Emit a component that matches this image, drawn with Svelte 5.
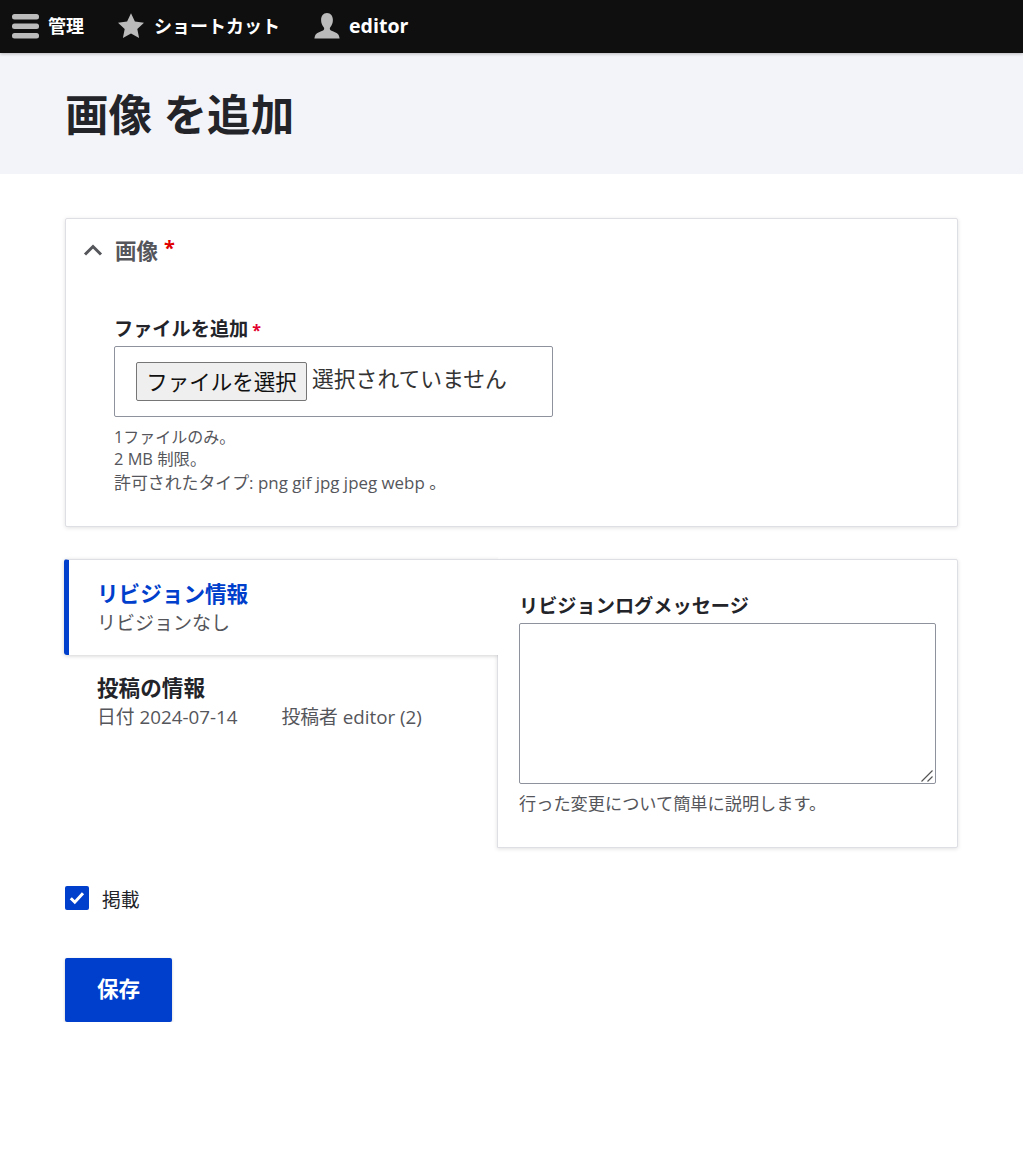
<script>
  const hints = ['1ファイルのみ。', '2 MB 制限。', '許可されたタイプ: png gif jpg jpeg webp 。'];
</script>

<div class="toolbar">
  <a class="tool first">
    <svg width="28" height="28" viewBox="0 0 28 28"><g fill="#bbb"><rect x="0" y="2" width="27" height="5.5" rx="2.5"/><rect x="0" y="11.5" width="27" height="5.5" rx="2.5"/><rect x="0" y="21" width="27" height="5.5" rx="2.5"/></g></svg>
    <span>管理</span>
  </a>
  <a class="tool second">
    <svg width="28" height="28" viewBox="0 0 28 28"><path fill="#bbb" d="M14 1.2l3.900 8.400 9.100 1.100-6.700 6.200 1.800 9.100L14 21.500l-8.100 4.500 1.800-9.100L1 10.700l9.100-1.100z"/></svg>
    <span>ショートカット</span>
  </a>
  <a class="tool third">
    <svg width="28" height="28" viewBox="0 0 28 28"><path fill="#bbb" d="M14 1c3.800 0 5.900 3 5.900 7 0 3-1.100 5.600-2.600 7.200-.8.900-.6 2.600.6 3.300 2.200 1.200 6.200 2 7.600 4.300.6 1.100 1 2.800 1.100 3.700H1.400c.1-.9.500-2.600 1.100-3.700 1.400-2.300 5.400-3.100 7.600-4.300 1.200-.7 1.400-2.400.6-3.300C9.200 13.600 8.100 11 8.100 8c0-4 2.100-7 5.900-7z"/></svg>
    <span class="latin">editor</span>
  </a>
</div>

<header class="page-head">
  <h1>画像 を追加</h1>
</header>

<main>
  <section class="card image-card">
    <div class="summary">
      <svg class="chev" width="20" height="12" viewBox="0 0 20 12"><path d="M2 10.500L10 2.500l8 8" fill="none" stroke="#55565b" stroke-width="3"/></svg>
      <span class="sum-label">画像</span><span class="sum-star">*</span>
    </div>
    <div class="image-body">
      <div class="label">ファイルを追加<span class="star">*</span></div>
      <div class="file-box">
        <button type="button" class="file-btn">ファイルを選択</button>
        <span class="file-none">選択されていません</span>
      </div>
      <div class="hints">
        {#each hints as h}<div>{h}</div>{/each}
      </div>
    </div>
  </section>

  <div class="split">
    <div class="tabs">
      <div class="tab active">
        <div class="tab-title">リビジョン情報</div>
        <div class="tab-sub">リビジョンなし</div>
      </div>
      <div class="tab plain">
        <div class="tab-title dark">投稿の情報</div>
        <div class="tab-sub meta"><span>日付 2024-07-14</span><span>投稿者 editor (2)</span></div>
      </div>
    </div>
    <div class="panel">
      <div class="label">リビジョンログメッセージ</div>
      <div class="area-wrap">
        <textarea></textarea>
        <svg class="grip" width="12" height="12" viewBox="0 0 12 12"><path d="M.5 11.500l11-11M6.500 11.500l5-5" fill="none" stroke="#555" stroke-width="1.200"/></svg>
      </div>
      <div class="desc">行った変更について簡単に説明します。</div>
    </div>
  </div>

  <label class="check">
    <span class="box">
      <svg width="16" height="14" viewBox="0 0 16 14"><path d="M1.800 7.200l4 4 8.200-9" fill="none" stroke="#fff" stroke-width="3"/></svg>
    </span>
    <span class="check-text">掲載</span>
  </label>

  <button type="button" class="save">保存</button>
</main>

<style>
  :global(body) {
    margin: 0;
    background: #fff;
    color: #232429;
    font-family: "Open Sans", "Noto Sans CJK JP", sans-serif;
    font-size: 16px;
  }
  .toolbar {
    height: 53px;
    background: #0f0f0f;
    display: flex;
    align-items: center;
    box-shadow: 0 1px 3px rgba(0, 0, 0, 0.25);
    position: relative;
    color: #fff;
    font-weight: 700;
    font-size: 18px;
  }
  .tool { display: flex; align-items: center; }
  .tool svg { margin-top: -1px; }
  .tool span { margin-top: -3px; }
  .tool span.latin { font-size: 19.6px; margin-top: -2px; }
  .tool.first { margin-left: 12px; gap: 8px; }
  .tool.second { margin-left: 33px; gap: 9px; }
  .tool.third { margin-left: 33px; gap: 8px; }
  .page-head {
    height: 121px;
    background: #f3f4f9;
    padding: 2px 0 0 65px;
    box-sizing: border-box;
    display: flex;
    align-items: center;
  }
  h1 {
    margin: 0;
    font-size: 43.6px;
    line-height: 1.2;
    font-weight: 700;
    color: #232429;
  }
  main { padding: 44px 65px 0; }
  .card {
    background: #fff;
    border: 1px solid #dedfe4;
    border-radius: 2px;
    box-shadow: 0 1px 4px rgba(0, 0, 0, 0.12);
    box-sizing: border-box;
  }
  .image-card { height: 309px; }
  .summary {
    display: flex;
    align-items: center;
    padding: 17px 0 0 17px;
    height: 28px;
    color: #55565b;
    font-weight: 700;
    font-size: 21.5px;
  }
  .chev { margin-right: 12px; }
  .sum-label { margin-top: -2px; }
  .sum-star { color: #e00000; margin-left: 6px; position: relative; top: -3px; font-size: 20px; }
  .image-body { padding: 52px 0 0 48px; }
  .label {
    font-weight: 700;
    font-size: 19.2px;
    line-height: 26px;
    color: #232429;
  }
  .star { color: #e2002e; font-size: 16px; margin-left: 4px; }
  .file-box {
    width: 439px;
    height: 71px;
    box-sizing: border-box;
    border: 1px solid #8e929c;
    border-radius: 2px;
    padding: 15px 0 0 21px;
    margin-top: 3px;
    display: flex;
    align-items: flex-start;
    gap: 5px;
    font-size: 21.8px;
  }
  .file-btn {
    width: 171px;
    height: 39px;
    padding: 0;
    background: #efefef;
    border: 1px solid #767676;
    border-radius: 2px;
    font: inherit;
    color: #111;
    font-size: 21.5px;
    line-height: 1;
  }
  .file-none { line-height: 33px; color: #333; }
  .hints {
    margin-top: 9px;
    color: #55565b;
    font-size: 16px;
    line-height: 23px;
  }
  .hints div:nth-child(2) { font-size: 16.4px; margin-top: -2px; }
  .hints div:nth-child(3) { font-size: 16.9px; margin-top: 1px; }
  .split {
    margin-top: 32px;
    display: flex;
    height: 289px;
    align-items: stretch;
  }
  .tabs { width: 432px; flex: none; position: relative; z-index: 1; }
  .tab { box-sizing: border-box; padding-left: 32px; }
  .tab.active {
    height: 96px;
    margin-left: -1px;
    padding: 19px 0 0 28px;
    border-left: 5px solid #003ecc;
    border-top: 1px solid #dedfe4;
    border-radius: 3px 0 0 3px;
    background: #fff;
    width: 434px;
    box-shadow: 0 1px 4px rgba(0, 0, 0, 0.18);
    clip-path: inset(-5px 0 -6px -5px);
    position: relative;
  }
  .tab.plain { padding-top: 18px; }
  .tab-title {
    font-size: 21.6px;
    line-height: 30px;
    font-weight: 700;
    color: #003ecc;
  }
  .tab-title.dark { color: #232429; }
  .tab-sub {
    font-size: 19px;
    line-height: 28px;
    color: #55565b;
  }
  .meta { display: flex; gap: 44px; font-size: 18.8px; }
  .panel {
    flex: 1;
    background: #fff;
    border: 1px solid #dedfe4;
    border-radius: 0 2px 2px 0;
    box-shadow: 0 1px 4px rgba(0, 0, 0, 0.12);
    box-sizing: border-box;
    padding: 33px 21px 0;
  }
  .area-wrap { position: relative; margin-top: 4px; width: 417px; height: 161px; }
  textarea {
    display: block;
    width: 100%;
    height: 100%;
    box-sizing: border-box;
    margin: 0;
    border: 1px solid #8e929c;
    border-radius: 2px;
    background: #fff;
    outline: none;
    resize: none;
  }
  .grip { position: absolute; right: 3px; bottom: 2px; }
  .desc { margin-top: 8px; font-size: 17.2px; line-height: 23px; color: #55565b; }
  .check {
    display: flex;
    align-items: flex-start;
    gap: 13px;
    margin-top: 38px;
    font-size: 18.8px;
    line-height: 24px;
    color: #232429;
  }
  .check-text { margin-top: 2px; }
  .box {
    width: 24px;
    height: 24px;
    background: #003ecc;
    border-radius: 2px;
    display: flex;
    align-items: center;
    justify-content: center;
  }
  .save {
    display: block;
    margin-top: 46px;
    width: 107px;
    height: 64px;
    padding: 0 0 5px;
    border: 0;
    border-radius: 2px;
    background: #003ecc;
    color: #fff;
    font: inherit;
    font-weight: 700;
    font-size: 21.6px;
    box-shadow: 0 1px 3px rgba(0, 0, 0, 0.2);
  }
</style>
